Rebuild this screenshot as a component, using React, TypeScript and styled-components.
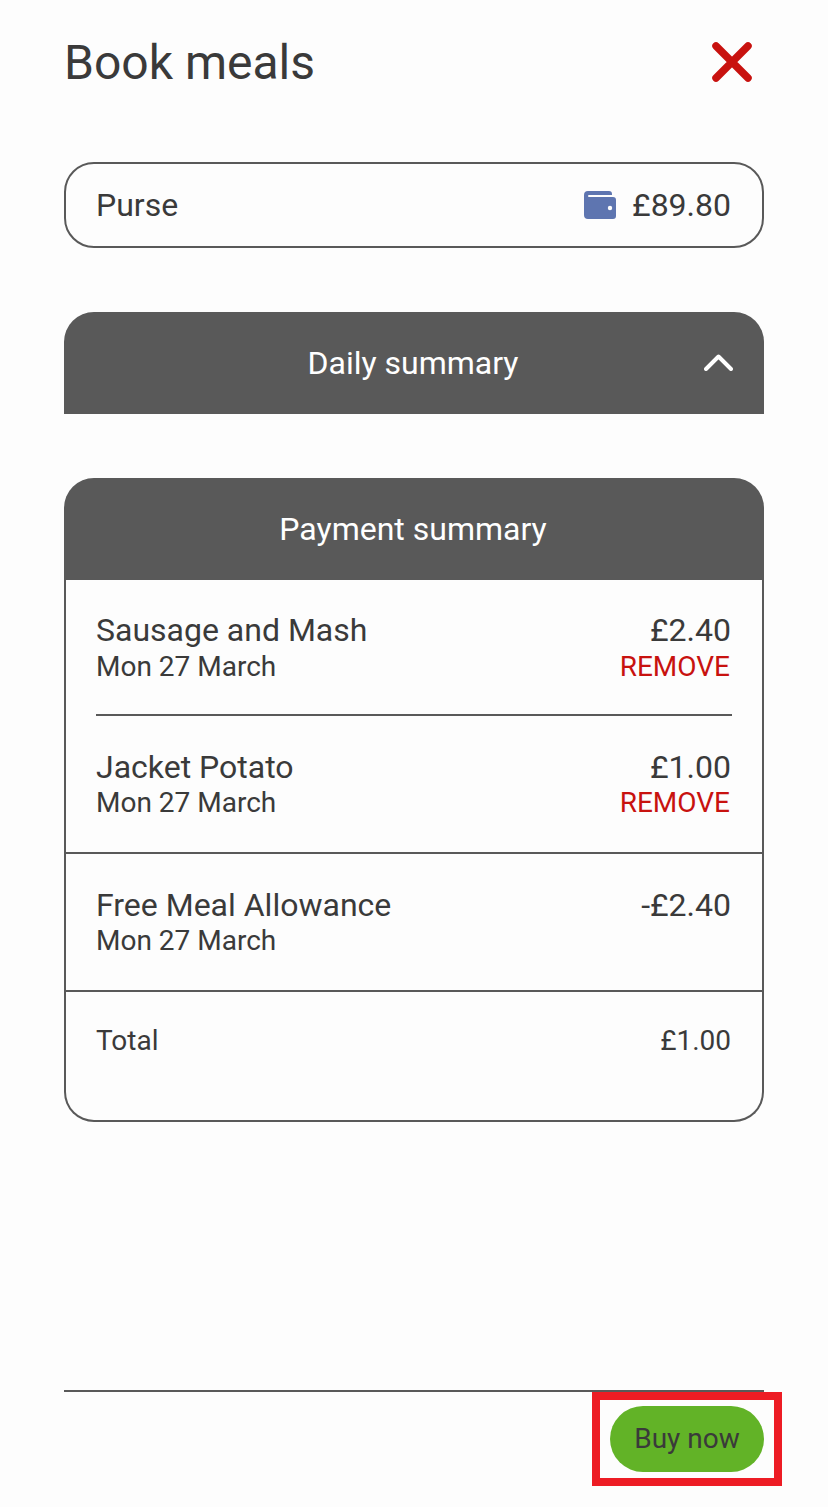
import React from 'react'
import styled, { createGlobalStyle } from 'styled-components'

const GlobalStyle = createGlobalStyle`
  html, body {
    margin: 0;
    padding: 0;
    background: #fdfdfd;
  }
  * {
    box-sizing: border-box;
  }
  svg {
    display: block;
  }
`

type LineItem = {
  name: string
  date: string
  price: string
  removable?: boolean
}

const items: LineItem[] = [
  { name: 'Sausage and Mash', date: 'Mon 27 March', price: '£2.40', removable: true },
  { name: 'Jacket Potato', date: 'Mon 27 March', price: '£1.00', removable: true },
  { name: 'Free Meal Allowance', date: 'Mon 27 March', price: '-£2.40' },
]

const WalletIcon: React.FC = () => (
  <svg width="32" height="28" viewBox="0 0 32 28">
    <path
      d="M4 0H25a3 3 0 0 1 3 3V4H5a1 1 0 0 0 0 2H29a3 3 0 0 1 3 3V25a3 3 0 0 1-3 3H4a4 4 0 0 1-4-4V4a4 4 0 0 1 4-4z"
      fill="#5e75b0"
    />
    <circle cx="26" cy="17" r="2.2" fill="#fdfdfd" />
  </svg>
)

const CloseIcon: React.FC = () => (
  <svg width="40" height="40" viewBox="0 0 40 40">
    <path d="M4 4L36 36M36 4L4 36" stroke="#c8120f" strokeWidth="7.5" strokeLinecap="round" fill="none" />
  </svg>
)

const ChevronIcon: React.FC = () => (
  <svg width="29" height="17" viewBox="0 0 29 17">
    <path
      d="M2 15L14.5 2.5L27 15"
      stroke="#fff"
      strokeWidth="4"
      strokeLinecap="round"
      strokeLinejoin="round"
      fill="none"
    />
  </svg>
)

const App: React.FC = () => {
  return (
    <>
      <GlobalStyle />
      <Page>
        <TitleRow>
          <Title>Book meals</Title>
          <CloseButton>
            <CloseIcon />
          </CloseButton>
        </TitleRow>

        <Purse>
          <span>Purse</span>
          <PurseAmount>
            <WalletIcon />
            £89.80
          </PurseAmount>
        </Purse>

        <DailyHeader>
          Daily summary
          <Chevron>
            <ChevronIcon />
          </Chevron>
        </DailyHeader>

        <Card>
          <CardHeader>Payment summary</CardHeader>
          <CardBody>
            {items.map((item, i) => (
              <ItemRow key={item.name} $inset={i === 0}>
                <div>
                  <ItemName $lift={i === 0}>{item.name}</ItemName>
                  <ItemDate>{item.date}</ItemDate>
                </div>
                <ItemRight>
                  <ItemName $lift={i === 0}>{item.price}</ItemName>
                  {item.removable && <Remove>REMOVE</Remove>}
                </ItemRight>
              </ItemRow>
            ))}
            <TotalRow>
              <span>Total</span>
              <span>£1.00</span>
            </TotalRow>
          </CardBody>
        </Card>

        <Footer>
          <BuyButton>Buy now</BuyButton>
          <Highlight />
        </Footer>
      </Page>
    </>
  )
}
export default App

const Page = styled.div`
  width: 828px;
  height: 1507px;
  padding: 0 64px;
  display: flex;
  flex-direction: column;
  font-family: Roboto, 'Liberation Sans', sans-serif;
  color: #3a3a3a;
  overflow: hidden;
`

const TitleRow = styled.div`
  height: 162px;
  padding-top: 32px;
  display: flex;
  justify-content: space-between;
  align-items: flex-start;
`

const Title = styled.h1`
  margin: 1px 0 0;
  font-size: 48px;
  font-weight: 400;
  line-height: 60px;
`

const CloseButton = styled.div`
  width: 40px;
  height: 40px;
  margin: 10px 12px 0 0;
`

const Purse = styled.div`
  flex: none;
  height: 86px;
  padding: 0 31px 0 30px;
  border: 2px solid #595959;
  border-radius: 30px;
  display: flex;
  justify-content: space-between;
  align-items: center;
  font-size: 32px;
`

const PurseAmount = styled.div`
  display: flex;
  align-items: center;
  gap: 16px;
`

const DailyHeader = styled.div`
  flex: none;
  position: relative;
  height: 102px;
  margin-top: 64px;
  padding-right: 2px;
  background: #595959;
  border-radius: 30px 30px 0 0;
  display: flex;
  justify-content: center;
  align-items: center;
  color: #fff;
  font-size: 32px;
`

const Chevron = styled.div`
  position: absolute;
  top: 42px;
  right: 31px;
`

const Card = styled.div`
  flex: none;
  height: 644px;
  margin-top: 64px;
  display: flex;
  flex-direction: column;
`

const CardHeader = styled.div`
  flex: none;
  height: 102px;
  padding-right: 2px;
  background: #595959;
  border-radius: 30px 30px 0 0;
  display: flex;
  justify-content: center;
  align-items: center;
  color: #fff;
  font-size: 32px;
`

const CardBody = styled.div`
  flex: 1;
  border: 2px solid #595959;
  border-top: none;
  border-radius: 0 0 30px 30px;
`

const ItemRow = styled.div<{ $inset: boolean }>`
  position: relative;
  height: ${(p) => (p.$inset ? '136px' : '138px')};
  padding: 32px 31px 0 30px;
  display: flex;
  justify-content: space-between;
  border-bottom: ${(p) => (p.$inset ? 'none' : '2px solid #595959')};

  ${(p) =>
    p.$inset &&
    `
    &::after {
      content: '';
      position: absolute;
      left: 30px;
      right: 30px;
      bottom: 0;
      height: 2px;
      background: #595959;
    }
  `}
`

const ItemName = styled.div<{ $lift: boolean }>`
  margin: ${(p) => (p.$lift ? '-1px 0 1px' : '0')};
  font-size: 32px;
  line-height: 38px;
`

const ItemDate = styled.div`
  font-size: 28px;
  line-height: 34px;
`

const ItemRight = styled.div`
  text-align: right;
`

const Remove = styled.div`
  margin-right: 1px;
  font-size: 28px;
  line-height: 34px;
  color: #c8120f;
`

const TotalRow = styled.div`
  padding: 32px 31px 0 30px;
  display: flex;
  justify-content: space-between;
  font-size: 28px;
  line-height: 34px;
`

const Footer = styled.div`
  position: relative;
  margin-top: auto;
  margin-bottom: 35px;
  padding-top: 14px;
  border-top: 2px solid #595959;
  display: flex;
  justify-content: flex-end;
`

const BuyButton = styled.div`
  width: 154px;
  height: 66px;
  padding-bottom: 2px;
  background: #62b327;
  border-radius: 33px;
  display: flex;
  justify-content: center;
  align-items: center;
  font-size: 28px;
`

const Highlight = styled.div`
  position: absolute;
  top: 0;
  right: -18px;
  width: 190px;
  height: 94px;
  border: 8px solid #ed1c24;
`
